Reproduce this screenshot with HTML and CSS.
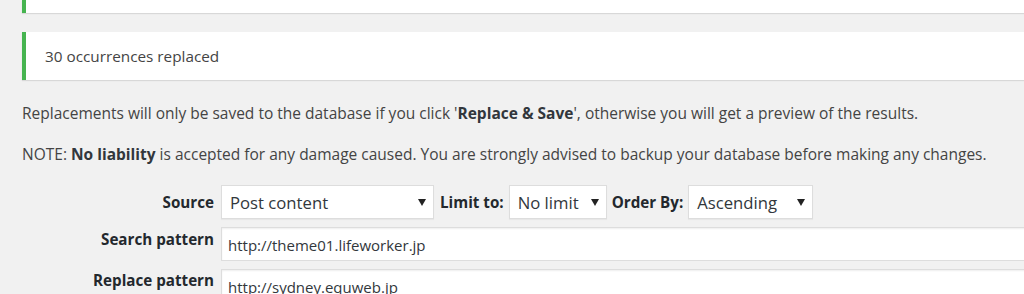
FILE: index.html
```html
<!DOCTYPE html>
<html>
<head>
<meta charset="utf-8">
<link rel="stylesheet" href="styles.css">
</head>
<body>
<div class="wrap">
  <div class="notice notice-top"></div>
  <div class="notice notice-msg">30 occurrences replaced</div>
  <p class="info info-first">Replacements will only be saved to the database if you click '<strong>Replace &amp; Save</strong>', otherwise you will get a preview of the results.</p>
  <p class="info info-second">NOTE: <strong>No liability</strong> is accepted for any damage caused. You are strongly advised to backup your database before making any changes.</p>
  <div class="form">
    <label class="lbl lbl-source">Source</label>
    <div class="row-source">
      <div class="select sel-source"><span>Post content</span><svg class="arrow" width="8" height="7" viewBox="0 0 8 7"><polygon points="0,0 8,0 4,7" fill="#222"/></svg></div>
      <span class="inline-lbl lbl-limit">Limit to:</span>
      <div class="select sel-limit"><span>No limit</span><svg class="arrow" width="8" height="7" viewBox="0 0 8 7"><polygon points="0,0 8,0 4,7" fill="#222"/></svg></div>
      <span class="inline-lbl lbl-order">Order By:</span>
      <div class="select sel-order"><span>Ascending</span><svg class="arrow" width="8" height="7" viewBox="0 0 8 7"><polygon points="0,0 8,0 4,7" fill="#222"/></svg></div>
    </div>
    <label class="lbl lbl-search">Search pattern</label>
    <div class="input input-search">http://theme01.lifeworker.jp</div>
    <label class="lbl lbl-replace">Replace pattern</label>
    <div class="input input-replace">http://sydney.equweb.jp</div>
  </div>
</div>
</body>
</html>
```
FILE: styles.css
```css
html, body {
  margin: 0;
  padding: 0;
  background: #f1f1f1;
  overflow: hidden;
  height: 294px;
}
body {
  font-family: "Open Sans", "Noto Sans", sans-serif;
  font-size: 15.5px;
  color: #444;
}
.wrap {
  padding-left: 22px;
}
.notice {
  background: #fff;
  border-left: 4px solid #46b450;
  box-shadow: 0 1px 1px rgba(0, 0, 0, 0.1);
}
.notice-top {
  height: 13px;
}
.notice-msg {
  margin-top: 19px;
  height: 48px;
  line-height: 48px;
  padding-left: 19px;
  font-size: 15.3px;
  color: #444;
}
.info {
  margin: 0;
  line-height: 20px;
}
.info-first {
  margin-top: 23px;
}
.info-second {
  margin-top: 21px;
}
strong {
  font-weight: 700;
  color: #32373c;
}
.form {
  margin-top: 21px;
  display: grid;
  grid-template-columns: 192px 1fr;
  column-gap: 7px;
  row-gap: 8px;
}
.lbl {
  text-align: right;
  font-weight: 700;
  color: #23282d;
  font-size: 15.2px;
  line-height: 18px;
}
.lbl-source {
  align-self: center;
}
.lbl-search {
  padding-top: 3px;
}
.lbl-replace {
  padding-top: 2px;
}
.row-source {
  display: flex;
  align-items: center;
}
.select {
  display: flex;
  align-items: center;
  justify-content: space-between;
  box-sizing: border-box;
  height: 34px;
  background: #fff;
  border: 1px solid #ddd;
  box-shadow: 0 1px 1px rgba(0, 0, 0, 0.04);
  padding: 0 7px 0 8px;
  font-size: 16.7px;
  color: #32373c;
}
.arrow {
  flex: none;
}
.sel-source { width: 213px; }
.sel-limit { width: 98px; }
.sel-order { width: 125px; }
.inline-lbl {
  font-weight: 700;
  font-size: 15.2px;
  color: #23282d;
}
.lbl-limit { margin: 0 5px 0 6px; }
.lbl-order { margin: 0 5px 0 5px; }
.input {
  box-sizing: border-box;
  height: 34px;
  background: #fff;
  border: 1px solid #ddd;
  box-shadow: inset 0 1px 2px rgba(0, 0, 0, 0.07);
  padding: 4px 6px 0;
  line-height: 26px;
  font-size: 15px;
  color: #32373c;
  margin-right: -20px;
}
```
